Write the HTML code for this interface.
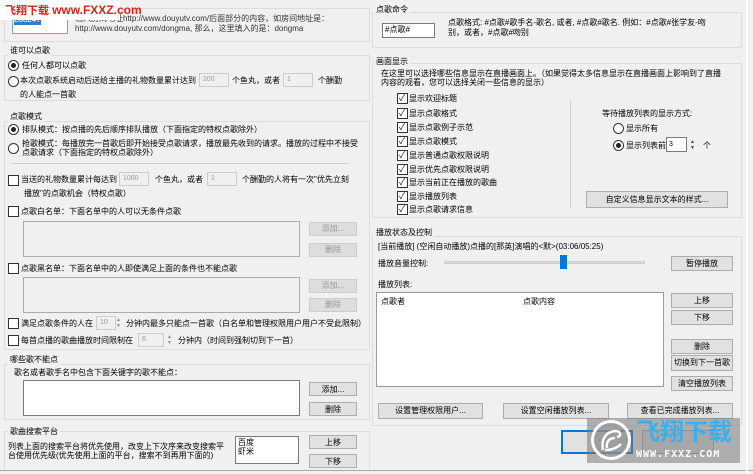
<!DOCTYPE html><html><head><meta charset="utf-8"><style>
*{margin:0;padding:0;box-sizing:border-box}
body{width:753px;height:474px;background:#f0f0f0;font:8px "Liberation Sans","Noto Sans CJK SC",sans-serif;color:#000;position:relative;overflow:hidden}
div,span{position:absolute;white-space:nowrap;line-height:11px}
.g{border:1px solid #dcdcdc}
.l{background:#f0f0f0;padding:0 2px}
.in{background:#fff;border:1px solid #7a7a7a}
.dis{background:#f0f0f0;border:1px solid #ccc;color:#999;font-size:7px;padding-left:3px;line-height:12px}
.b{background:#e1e1e1;border:1px solid #adadad;text-align:center;line-height:13px}
.bd{background:#ddd;border:1px solid #ccc;color:#999;text-align:center;line-height:12px}
.r{width:11px;height:11px;border:1px solid #333;border-radius:50%;background:#fff}
.r.on::after{content:"";position:absolute;left:2px;top:2px;width:5px;height:5px;border-radius:50%;background:#222}
.c{width:11px;height:11px;border:1px solid #333;background:#fff}
.c.on::after{content:"✓";position:absolute;left:1px;top:-1px;font-size:9px;color:#222}
.sp{width:8px;color:#888;font-size:5px;line-height:6px}
</style></head><body>
<!-- left column -->
<div class="g" style="left:4px;top:8px;width:366px;height:34px"></div>
<div class="in" style="left:12px;top:12px;width:56px;height:22px;border-color:#7aa"><span style="left:1px;top:2px;background:#3a78c8;color:#fff;font-size:8px;line-height:10px">288247</span></div>
<div style="left:75px;top:14px;line-height:10px;color:#333">输入房间地址http://www.douyutv.com/后面部分的内容，如房间地址是：<br>http://www.douyutv.com/dongma, 那么，这里填入的是：dongma</div>
<div style="left:0;top:0;width:120px;height:20px;background:#fff"></div>
<div style="left:5px;top:5px;color:#e0201a;font-weight:bold;font-size:11px">飞翔下载 <span style="position:static;font-size:12px">www.FXXZ.com</span></div>

<div class="g" style="left:4px;top:55px;width:366px;height:46px"></div>
<div class="l" style="left:8px;top:45px">谁可以点歌</div>
<div class="r on" style="left:8px;top:60px"></div><div style="left:22px;top:60px">任何人都可以点歌</div>
<div class="r" style="left:8px;top:76px"></div><div style="left:20px;top:75px">本次点歌系统启动后送给主播的礼物数量累计达到</div>
<div class="dis" style="left:199px;top:73px;width:30px;height:14px">200</div><div style="left:232px;top:75px">个鱼丸，或者</div>
<div class="dis" style="left:283px;top:73px;width:30px;height:14px">1</div><div style="left:318px;top:75px">个酬勤</div>
<div style="left:20px;top:89px">的人能点一首歌</div>

<div class="g" style="left:4px;top:121px;width:366px;height:229px"></div>
<div class="l" style="left:8px;top:111px">点歌模式</div>
<div class="r on" style="left:8px;top:124px"></div><div style="left:22px;top:124px">排队模式：按点播的先后顺序排队播放（下面指定的特权点歌除外）</div>
<div class="r" style="left:8px;top:143px"></div><div style="left:22px;top:139px;line-height:9px">抢歌模式：每播放完一首歌后即开始接受点歌请求，播放最先收到的请求。播放的过程中不接受<br>点歌请求（下面指定的特权点歌除外）</div>
<div style="left:12px;top:163px;width:336px;height:1px;background:#ccc"></div>
<div class="c" style="left:8px;top:175px"></div><div style="left:21px;top:174px">当送的礼物数量累计每达到</div>
<div class="dis" style="left:119px;top:172px;width:30px;height:14px">1000</div><div style="left:155px;top:174px">个鱼丸，或者</div>
<div class="dis" style="left:207px;top:172px;width:30px;height:14px">1</div><div style="left:242px;top:174px">个酬勤的人将有一次"优先立刻</div>
<div style="left:24px;top:188px">播放"的点歌机会（特权点歌）</div>
<div class="c" style="left:8px;top:206px"></div><div style="left:21px;top:206px">点歌白名单：下面名单中的人可以无条件点歌</div>
<div style="left:23px;top:221px;width:277px;height:36px;border:1px solid #aaa;background:#f0f0f0"></div>
<div class="bd" style="left:309px;top:222px;width:48px;height:14px">添加...</div>
<div class="bd" style="left:309px;top:243px;width:48px;height:14px">删除</div>
<div class="c" style="left:8px;top:263px"></div><div style="left:21px;top:263px">点歌黑名单：下面名单中的人即使满足上面的条件也不能点歌</div>
<div style="left:23px;top:277px;width:277px;height:36px;border:1px solid #aaa;background:#f0f0f0"></div>
<div class="bd" style="left:309px;top:279px;width:48px;height:14px">添加...</div>
<div class="bd" style="left:309px;top:298px;width:48px;height:14px">删除</div>
<div class="c" style="left:8px;top:318px"></div><div style="left:21px;top:318px">满足点歌条件的人在</div>
<div class="dis" style="left:96px;top:316px;width:20px;height:14px">10</div><div class="sp" style="left:116px;top:317px">▲<br>▼</div>
<div style="left:126px;top:318px">分钟内最多只能点一首歌（白名单和管理权限用户用户不受此限制）</div>
<div class="c" style="left:8px;top:335px"></div><div style="left:21px;top:335px">每首点播的歌曲播放时间限制在</div>
<div class="dis" style="left:138px;top:333px;width:26px;height:14px">6</div><div class="sp" style="left:167px;top:334px">▲<br>▼</div>
<div style="left:178px;top:335px">分钟内（时间到强制切到下一首）</div>

<div class="g" style="left:4px;top:364px;width:366px;height:56px"></div>
<div class="l" style="left:8px;top:354px">哪些歌不能点</div>
<div style="left:14px;top:367px">歌名或者歌手名中包含下面关键字的歌不能点：</div>
<div class="in" style="left:23px;top:380px;width:277px;height:36px"></div>
<div class="b" style="left:309px;top:382px;width:48px;height:14px">添加...</div>
<div class="b" style="left:309px;top:402px;width:48px;height:14px">删除</div>

<div class="g" style="left:4px;top:431px;width:366px;height:40px"></div>
<div class="l" style="left:8px;top:426px">歌曲搜索平台</div>
<div style="left:8px;top:442px;line-height:9px">列表上面的搜索平台将优先使用，改变上下次序来改变搜索平<br>台使用优先级(优先使用上面的平台，搜索不到再用下面的)</div>
<div class="in" style="left:235px;top:436px;width:64px;height:28px;line-height:9px;padding:1px 2px">百度<br>虾米</div>
<div class="b" style="left:309px;top:435px;width:48px;height:14px">上移</div>
<div class="b" style="left:309px;top:454px;width:48px;height:14px">下移</div>
<div style="left:0;top:470px;width:753px;height:1px;background:#aaa"></div>

<!-- right column -->
<div class="g" style="left:372px;top:12px;width:370px;height:36px"></div>
<div class="l" style="left:374px;top:4px">点歌命令</div>
<div class="in" style="left:382px;top:23px;width:53px;height:15px;padding-left:2px;line-height:12px">#点歌#</div>
<div style="left:448px;top:18px;line-height:10px">点歌格式: #点歌#歌手名-歌名, 或者, #点歌#歌名. 例如：#点歌#张学友-吻<br>别，或者，#点歌#吻别</div>
<div class="g" style="left:372px;top:63px;width:370px;height:155px"></div>
<div class="l" style="left:374px;top:56px">画面显示</div>
<div style="left:381px;top:69px;line-height:9px">在这里可以选择哪些信息显示在直播画面上。（如果觉得太多信息显示在直播画面上影响到了直播<br>内容的观看，您可以选择关闭一些信息的显示）</div>
<div class="c on" style="left:397px;top:93px"></div><div style="left:409px;top:93px">显示欢迎标题</div>
<div class="c on" style="left:397px;top:108px"></div><div style="left:409px;top:108px">显示点歌格式</div>
<div class="c on" style="left:397px;top:122px"></div><div style="left:409px;top:122px">显示点歌例子示范</div>
<div class="c on" style="left:397px;top:136px"></div><div style="left:409px;top:136px">显示点歌模式</div>
<div class="c on" style="left:397px;top:150px"></div><div style="left:409px;top:150px">显示普通点歌权限说明</div>
<div class="c on" style="left:397px;top:164px"></div><div style="left:409px;top:164px">显示优先点歌权限说明</div>
<div class="c on" style="left:397px;top:177px"></div><div style="left:409px;top:177px">显示当前正在播放的歌曲</div>
<div class="c on" style="left:397px;top:191px"></div><div style="left:409px;top:191px">显示播放列表</div>
<div class="c on" style="left:397px;top:204px"></div><div style="left:409px;top:204px">显示点歌请求信息</div>
<div style="left:570px;top:100px;width:1px;height:108px;background:#ccc"></div>
<div style="left:602px;top:108px">等待播放列表的显示方式:</div>
<div class="r" style="left:613px;top:123px"></div><div style="left:626px;top:123px">显示所有</div>
<div class="r on" style="left:613px;top:140px"></div><div style="left:626px;top:140px">显示列表前</div>
<div class="in" style="left:666px;top:137px;width:21px;height:15px;padding-left:2px;font-size:7px;line-height:13px">3</div>
<div class="sp" style="left:690px;top:139px;color:#444">▲<br>▼</div><div style="left:703px;top:140px">个</div>
<div class="b" style="left:586px;top:191px;width:142px;height:17px;line-height:15px">自定义信息显示文本的样式...</div>

<div class="g" style="left:372px;top:236px;width:370px;height:190px"></div>
<div class="l" style="left:374px;top:227px">播放状态及控制</div>
<div style="left:378px;top:241px">[当前播放] (空闲自动播放)点播的[那英]演唱的&lt;默&gt;(03:06/05:25)</div>
<div style="left:378px;top:258px">播放音量控制:</div>
<div style="left:444px;top:261px;width:201px;height:3px;background:#ddd;border:1px solid #ccc"></div>
<div style="left:560px;top:255px;width:7px;height:14px;background:#0078d7"></div>
<div class="b" style="left:671px;top:256px;width:62px;height:15px">暂停播放</div>
<div style="left:378px;top:279px">播放列表:</div>
<div class="in" style="left:376px;top:292px;width:288px;height:95px;border-color:#999"></div>
<div style="left:381px;top:296px">点歌者</div><div style="left:523px;top:296px">点歌内容</div>
<div class="b" style="left:671px;top:293px;width:62px;height:15px">上移</div>
<div class="b" style="left:671px;top:310px;width:62px;height:15px">下移</div>
<div class="b" style="left:671px;top:339px;width:62px;height:15px">删除</div>
<div class="b" style="left:671px;top:355px;width:62px;height:16px">切换到下一首歌</div>
<div class="b" style="left:671px;top:376px;width:62px;height:15px">清空播放列表</div>
<div class="b" style="left:378px;top:403px;width:105px;height:16px">设置管理权限用户...</div>
<div class="b" style="left:503px;top:403px;width:106px;height:16px">设置空闲播放列表...</div>
<div class="b" style="left:627px;top:403px;width:106px;height:16px">查看已完成播放列表...</div>
<div class="b" style="left:561px;top:430px;width:72px;height:24px;border:2px solid #0078d7"></div>
<div class="b" style="left:642px;top:430px;width:72px;height:24px"></div>
<div style="left:746px;top:0;width:2px;height:474px;background:#fff"></div>
<!-- watermark -->
<div style="left:587px;top:418px;width:153px;height:45px;background:rgba(120,120,120,.55)"></div>
<div style="left:591px;top:420px;width:40px;height:40px;border-radius:50%;border:3px solid #fff;background:rgba(150,150,150,.6)"></div>
<svg style="position:absolute;left:595px;top:424px" width="32" height="32" viewBox="0 0 32 32" fill="none" stroke="#fff" stroke-width="2.5"><path d="M8 26 C6 16 10 8 20 7 C26 7 27 12 22 13"/><path d="M12 24 C11 18 14 14 20 14"/><path d="M10 26 C16 26 22 24 26 20"/></svg>
<div style="left:636px;top:419px;color:#3ab0f0;font-size:24px;font-weight:bold;line-height:28px">飞翔下载</div>
<div style="left:636px;top:449px;color:#fff;font-size:10px;font-weight:bold;font-family:'DejaVu Sans Mono',monospace;letter-spacing:1px">WWW.FXXZ.COM</div>
</body></html>
